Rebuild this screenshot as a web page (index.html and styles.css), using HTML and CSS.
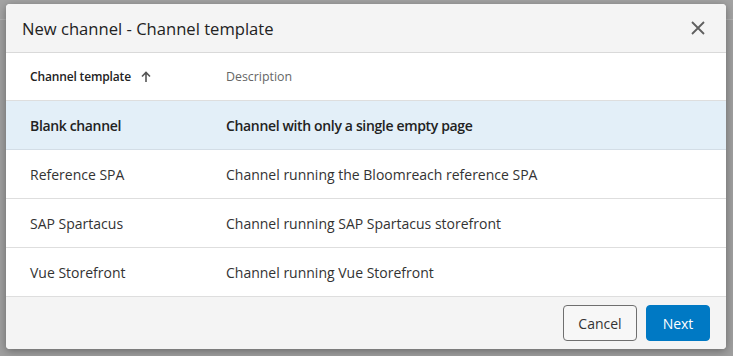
FILE: index.html
```html
<!DOCTYPE html>
<html>
<head>
<meta charset="utf-8">
<link rel="stylesheet" href="styles.css">
</head>
<body>
<div class="backdrop">
  <div class="dialog">
    <div class="dialog-header">
      <h1 class="dialog-title">New channel - Channel template</h1>
      <button class="close-btn" aria-label="Close">
        <svg width="16" height="16" viewBox="0 0 16 16"><path d="M2 2 L14 14 M14 2 L2 14" stroke="#5f5f5f" stroke-width="1.8" fill="none"/></svg>
      </button>
    </div>
    <div class="table">
      <div class="row head">
        <div class="cell c1">Channel template
          <svg class="sort" width="10" height="12" viewBox="0 0 10 12"><path d="M5 11 V2 M1 5.5 L5 1.5 L9 5.5" stroke="#555" stroke-width="1.6" fill="none"/></svg>
        </div>
        <div class="cell c2">Description</div>
      </div>
      <div class="row selected">
        <div class="cell c1">Blank channel</div>
        <div class="cell c2">Channel with only a single empty page</div>
      </div>
      <div class="row">
        <div class="cell c1">Reference SPA</div>
        <div class="cell c2">Channel running the Bloomreach reference SPA</div>
      </div>
      <div class="row">
        <div class="cell c1">SAP Spartacus</div>
        <div class="cell c2">Channel running SAP Spartacus storefront</div>
      </div>
      <div class="row">
        <div class="cell c1">Vue Storefront</div>
        <div class="cell c2">Channel running Vue Storefront</div>
      </div>
    </div>
    <div class="dialog-footer">
      <button class="btn btn-cancel">Cancel</button>
      <button class="btn btn-next">Next</button>
    </div>
  </div>
</div>
</body>
</html>
```
FILE: styles.css
```css
* { box-sizing: border-box; }
html, body { margin: 0; padding: 0; }
body {
  width: 733px;
  height: 356px;
  background: #a0a0a0;
  font-family: "Open Sans", "Liberation Sans", sans-serif;
  color: #222;
  overflow: hidden;
}
.backdrop {
  padding: 4px 7px 0 6px;
  background: linear-gradient(#a3a3a3 0, #a3a3a3 19px, #b0b0b0 19px, #b0b0b0 20px, #9f9f9f 20px);
  height: 356px;
}
.dialog {
  width: 720px;
  background: #fff;
  border-radius: 4px;
  overflow: hidden;
  box-shadow: 0 2px 8px rgba(0,0,0,0.35);
  display: flex;
  flex-direction: column;
}
.dialog-header {
  height: 49px;
  background: #f4f4f4;
  border-bottom: 1px solid #d9d9d9;
  display: flex;
  align-items: center;
  justify-content: space-between;
  padding: 0 20px 0 16px;
}
.dialog-title {
  margin: 0;
  font-size: 16.6px;
  font-weight: 400;
  color: #222;
}
.close-btn {
  border: 0;
  background: transparent;
  padding: 0;
  width: 16px;
  height: 16px;
  display: flex;
  cursor: pointer;
}
.table { display: flex; flex-direction: column; }
.row {
  display: flex;
  align-items: center;
  height: 49px;
  border-bottom: 1px solid #dedede;
  font-size: 14px;
  color: #333;
}
.row.head { height: 48px; font-size: 12px; }
.row.head .c1 { font-weight: 600; color: #222; letter-spacing: -0.15px; gap: 10px; }
.row.head .c2 { color: #666; font-size: 12.4px; }
.row.selected { background: #e3eff8; font-weight: 600; color: #222; border-bottom-color: #d3dde6; letter-spacing: -0.35px; }
.cell.c1 { width: 220px; padding-left: 24px; display: flex; align-items: center; gap: 8px; }
.cell.c2 { flex: 1; }
.sort { display: block; }
.dialog-footer {
  height: 52px;
  background: #f4f4f4;
  display: flex;
  align-items: center;
  justify-content: flex-end;
  gap: 9px;
  padding: 0 16px 0 0;
}
.btn {
  font-family: "Open Sans", "Liberation Sans", sans-serif;
  font-size: 14px;
  height: 36px;
  border-radius: 4px;
  cursor: pointer;
}
.btn-cancel {
  width: 74px;
  background: #f7f7f7;
  border: 1px solid #6f6f6f;
  color: #333;
}
.btn-next {
  width: 64px;
  background: #0079c4;
  border: 1px solid #0079c4;
  color: #fff;
}
```
